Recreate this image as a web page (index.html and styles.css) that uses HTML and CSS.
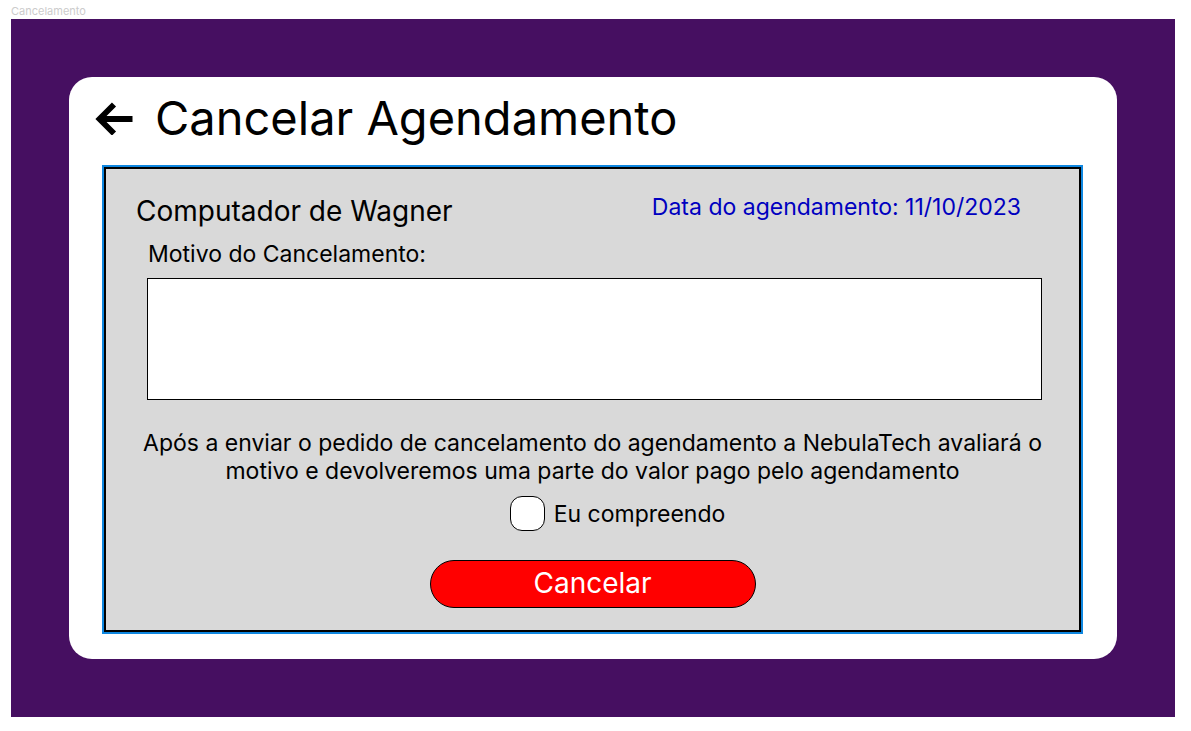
FILE: index.html
```html
<!DOCTYPE html>
<html lang="pt-BR">
<head>
<meta charset="utf-8">
<meta name="viewport" content="width=device-width, initial-scale=1">
<title>Cancelamento</title>
<link rel="stylesheet" href="styles.css">
</head>
<body>
<div class="frame-label">Cancelamento</div>
<main class="backdrop">
  <section class="card">
    <header class="card-header">
      <a class="back" href="#" aria-label="Voltar">
        <svg viewBox="0 0 38 34" width="38" height="34" fill="none" stroke="#000" stroke-width="5.8"><path d="M37.500 18H6M19 3.500L4.500 18l14.500 14.500"/></svg>
      </a>
      <h1 class="title">Cancelar Agendamento</h1>
    </header>
    <form class="panel">
      <div class="summary">
        <h2 class="device">Computador de Wagner</h2>
        <p class="date">Data do agendamento: 11/10/2023</p>
      </div>
      <label class="reason-label" for="reason">Motivo do Cancelamento:</label>
      <textarea class="reason" id="reason"></textarea>
      <p class="notice">Após a enviar o pedido de cancelamento do agendamento a NebulaTech avaliará o motivo e devolveremos uma parte do valor pago pelo agendamento</p>
      <div class="consent">
        <input class="check" type="checkbox" id="agree">
        <label for="agree">Eu compreendo</label>
      </div>
      <button class="submit" type="button">Cancelar</button>
    </form>
  </section>
</main>
</body>
</html>
```
FILE: styles.css
```css
* {
  box-sizing: border-box;
}

body {
  margin: 0;
  padding: 4px 16px 14px 11px;
  min-height: 100vh;
  display: flex;
  flex-direction: column;
  background: #fff;
  color: #000;
  font-family: Inter, "Liberation Sans", sans-serif;
  font-size: 23px;
  font-weight: 400;
  line-height: 28px;
}

h1, h2, p {
  margin: 0;
  font-weight: inherit;
}

.frame-label {
  font-size: 11px;
  line-height: 15px;
  color: #ccc;
}

.backdrop {
  flex: 1;
  display: flex;
  padding: 58px;
  background: #460f61;
}

.card {
  flex: 1;
  padding: 12px 36px 27px 35px;
  border-radius: 23px;
  background: #fff;
}

.card-header {
  display: flex;
  align-items: center;
  gap: 22px;
  margin-left: -9px;
}

.back {
  display: flex;
}

.title {
  font-size: 47px;
  line-height: 58px;
}

.panel {
  display: flex;
  flex-direction: column;
  margin-top: 20px;
  padding: 24px 30px 22px;
  border: 2px solid #000;
  outline: 2px solid #0f87e0;
  background: #d9d9d9;
}

.summary {
  display: flex;
  justify-content: space-between;
  padding-right: 28px;
}

.device {
  margin-top: 1px;
  font-size: 28px;
  line-height: 34px;
}

.date {
  color: #0000c0;
}

.reason-label {
  margin: 12px 0 10px 12px;
}

.reason {
  display: block;
  height: 122px;
  margin: 0 7px 0 11px;
  padding: 8px;
  border: 1px solid #000;
  border-radius: 0;
  background: #fff;
  font: inherit;
  resize: none;
}

.notice {
  margin-top: 29px;
  text-align: center;
}

.consent {
  display: flex;
  align-items: center;
  justify-content: center;
  gap: 9px;
  margin-top: 11px;
  padding-left: 50px;
}

.check {
  appearance: none;
  width: 35px;
  height: 35px;
  margin: 0;
  border: 1px solid #000;
  border-radius: 12px;
  background: #fff;
}

.submit {
  align-self: center;
  width: 326px;
  height: 48px;
  margin-top: 29px;
  padding: 0 0 2px;
  border: 1px solid #000;
  border-radius: 24px;
  background: #f00;
  color: #fff;
  font: inherit;
  font-size: 28px;
}
```
